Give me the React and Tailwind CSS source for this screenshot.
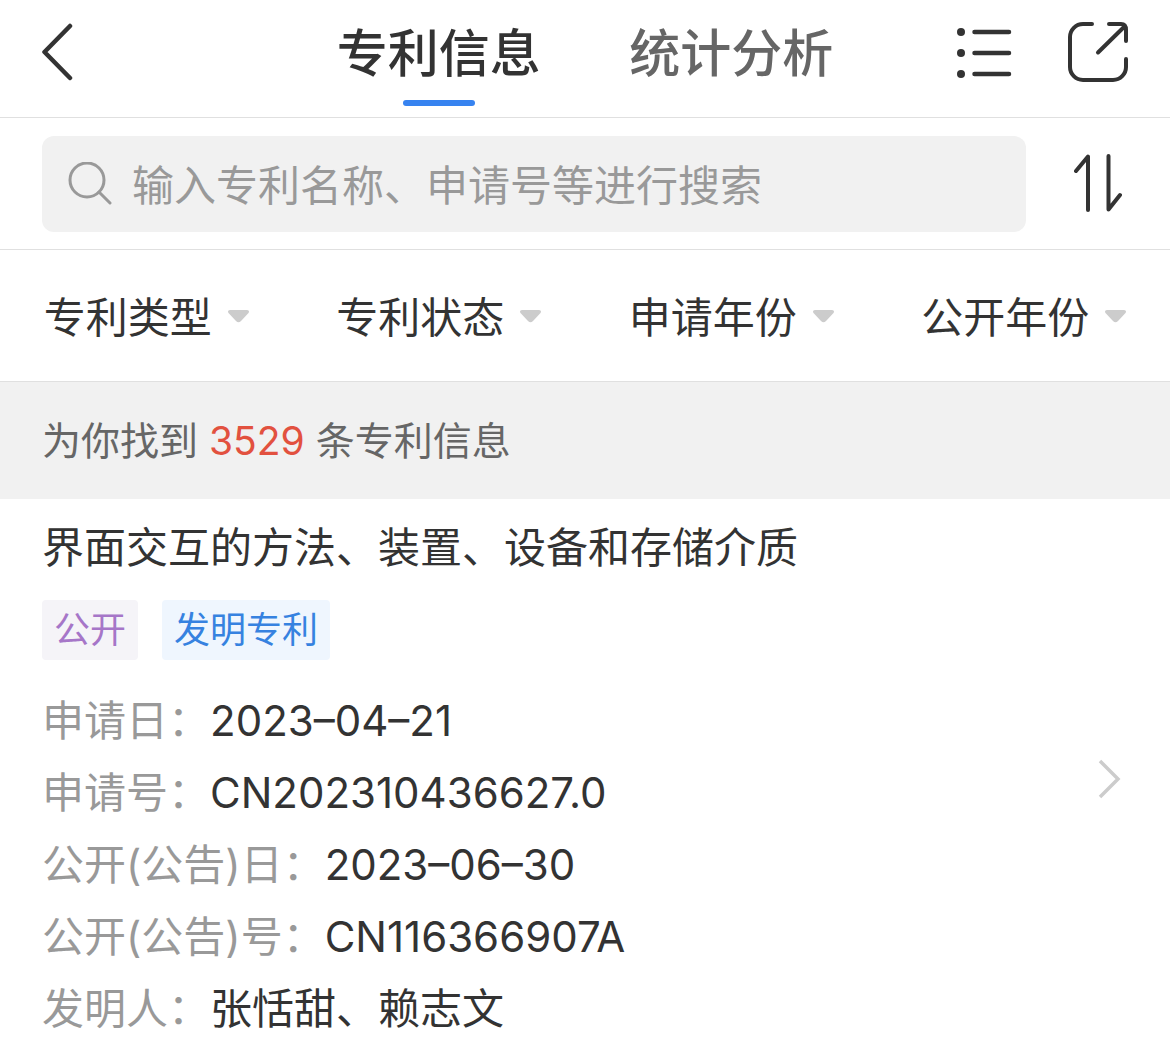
import React, { useState } from "react";

const tabs = ["专利信息", "统计分析"];

const filters = [
  { id: "type", label: "专利类型" },
  { id: "status", label: "专利状态" },
  { id: "applyYear", label: "申请年份" },
  { id: "publishYear", label: "公开年份" },
];

const patents = [
  {
    id: 1,
    title: "界面交互的方法、装置、设备和存储介质",
    status: "公开",
    type: "发明专利",
    fields: [
      { label: "申请日：", value: "2023–04–21" },
      { label: "申请号：", value: "CN202310436627.0" },
      { label: "公开(公告)日：", value: "2023–06–30" },
      { label: "公开(公告)号：", value: "CN116366907A" },
      { label: "发明人：", value: "张恬甜、赖志文" },
    ],
  },
];

const BackIcon = () => (
  <svg width="34" height="60" viewBox="0 0 34 60" fill="none" stroke="#333" strokeWidth="4.500" strokeLinecap="round" strokeLinejoin="round">
    <path d="M28 4 2.500 30 28 56" />
  </svg>
);

const ListIcon = () => (
  <svg width="55" height="52" viewBox="0 0 55 52" fill="#333">
    <circle cx="4" cy="6" r="4" />
    <circle cx="4" cy="27" r="4" />
    <circle cx="4" cy="48" r="4" />
    <path d="M17.500 6H52M17.500 27H52M17.500 48H52" stroke="#333" strokeWidth="4.500" strokeLinecap="round" />
  </svg>
);

const ShareIcon = () => (
  <svg width="60" height="60" viewBox="0 0 60 60" fill="none" stroke="#333" strokeWidth="4" strokeLinecap="round" strokeLinejoin="round">
    <path d="M24 2H15A13 13 0 0 0 2 15V45A13 13 0 0 0 15 58H45A13 13 0 0 0 58 45V37" />
    <path d="M41 2H53Q58 2 58 8V19" />
    <path d="M30 30.500 56 5" />
  </svg>
);

const SearchIcon = () => (
  <svg width="44" height="44" viewBox="0 0 44 44" fill="none" stroke="#999" strokeWidth="3" strokeLinecap="round">
    <circle cx="19" cy="18" r="17" />
    <path d="M31 30 42 41" />
  </svg>
);

const SortIcon = () => (
  <svg width="48" height="60" viewBox="0 0 48 60" fill="none" stroke="#333" strokeWidth="4" strokeLinecap="round" strokeLinejoin="round">
    <path d="M2 17 14 2.500V56" />
    <path d="M34.500 2V55.500L46 41" />
  </svg>
);

const CaretIcon = () => (
  <svg width="21" height="14" viewBox="0 0 21 14" fill="#ccc" className="shrink-0">
    <path d="M2 1H19Q22 1.500 20.500 4L13 12Q10.500 14.500 8 12L.5 4Q-1 1.500 2 1Z" />
  </svg>
);

const ChevronIcon = () => (
  <svg width="24" height="40" viewBox="0 0 24 40" fill="none" stroke="#ccc" strokeWidth="3.500" className="shrink-0">
    <path d="M2 2 20 20 2 38" />
  </svg>
);

const PatentCard = ({ patent }) => (
  <li>
    <a href="#patent" className="flex items-center justify-between pt-[13px] pb-2.5 pl-[42px] pr-12">
      <div>
        <h2 className="text-[42px] leading-[72px]">{patent.title}</h2>
        <div className="mt-4 flex gap-6 text-[36px] leading-[60px]">
          <span className="rounded bg-[#f5f4f8] px-3 text-[#a676c8]">{patent.status}</span>
          <span className="rounded bg-[#eff6fe] px-3 text-[#3682e0]">{patent.type}</span>
        </div>
        <dl className="mt-[25px] text-[42px] leading-[72px] font-[375]">
          {patent.fields.map((field) => (
            <div key={field.label} className="flex">
              <dt className="text-[#999]">{field.label}</dt>
              <dd>{field.value}</dd>
            </div>
          ))}
        </dl>
      </div>
      <ChevronIcon />
    </a>
  </li>
);

const App = () => {
  const [activeTab, setActiveTab] = useState(tabs[0]);
  const [keyword, setKeyword] = useState("");

  return (
    <div
      lang="zh-CN"
      className="min-h-screen bg-white font-[Inter,'Noto_Sans_CJK_SC',sans-serif] text-[#333]"
    >
      {/* Header */}
      <header className="grid h-[118px] grid-cols-4 border-b border-[#e0e0e0]">
        <div className="flex items-start pt-[22px] pl-[42px]">
          <button aria-label="返回">
            <BackIcon />
          </button>
        </div>
        {tabs.map((tab) => (
          <button
            key={tab}
            onClick={() => setActiveTab(tab)}
            className={`flex flex-col items-center pt-[18px] text-[51px] leading-[72px] font-medium whitespace-nowrap ${
              tab === activeTab ? "text-[#333]" : "text-[#666]"
            }`}
          >
            {tab}
            {tab === activeTab && <span className="mt-2.5 h-1.5 w-[72px] rounded-full bg-[#3783f0]" />}
          </button>
        ))}
        <div className="flex items-start justify-end gap-14 pt-[22px] pr-[42px]">
          <button aria-label="列表" className="flex h-[60px] items-center">
            <ListIcon />
          </button>
          <button aria-label="分享">
            <ShareIcon />
          </button>
        </div>
      </header>

      {/* Search */}
      <div className="flex h-[132px] items-center gap-12 border-b border-[#e0e0e0] pr-12 pl-[42px]">
        <label className="flex h-24 flex-1 items-center gap-5 rounded-xl bg-[#f1f1f1] px-[26px]">
          <SearchIcon />
          <input
            type="text"
            aria-label="搜索专利"
            value={keyword}
            onChange={(e) => setKeyword(e.target.value)}
            placeholder="输入专利名称、申请号等进行搜索"
            className="min-w-0 flex-1 bg-transparent pt-1 text-[42px] outline-none placeholder:text-[#999]"
          />
        </label>
        <button aria-label="排序">
          <SortIcon />
        </button>
      </div>

      {/* Filters */}
      <div className="grid h-[132px] grid-cols-4 border-b border-[#e0e0e0]">
        {filters.map((filter) => (
          <label key={filter.id} className="flex items-center justify-center gap-4">
            <select
              aria-label={filter.label}
              className="field-sizing-content appearance-none bg-transparent pt-1 text-[42px] outline-none"
            >
              <option>{filter.label}</option>
            </select>
            <CaretIcon />
          </label>
        ))}
      </div>

      {/* Result count */}
      <p className="bg-[#f1f1f1] px-[42px] text-[39px] leading-[117px] text-[#666]">
        为你找到 <span className="text-[#e2513f]">3529</span> 条专利信息
      </p>

      <ul>
        {patents.map((patent) => (
          <PatentCard key={patent.id} patent={patent} />
        ))}
      </ul>
    </div>
  );
};

export default App;
